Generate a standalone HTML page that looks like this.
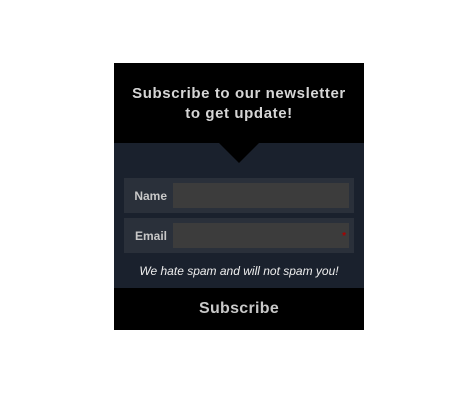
<!DOCTYPE html><html><head><style>
body{margin:0;background:#fff;width:464px;height:406px;position:relative;font-family:"Liberation Sans",sans-serif}
.p{position:absolute;left:114px;top:63px;width:250px;height:267px;background:#1a212d}
.h{position:absolute;left:0;top:0;width:250px;height:80px;background:#000;color:#d6d6d6;font-weight:bold;font-size:15px;letter-spacing:.6px;text-align:center;line-height:20px;padding-top:21px;box-sizing:border-box}
.t{position:absolute;left:105px;top:80px;width:0;height:0;border-left:20px solid transparent;border-right:20px solid transparent;border-top:20px solid #000}
.r{position:absolute;left:10px;width:230px;height:35px;background:#2a303a}
.r span{position:absolute;left:0;width:43px;text-align:right;top:11px;font-size:12px;font-weight:bold;color:#c8c8c8}
.r i{position:absolute;left:49px;top:5px;width:176px;height:25px;background:#3c3c3c}
.s{position:absolute;top:201px;left:0;width:250px;text-align:center;color:#eee;font-style:italic;font-size:12px}
.b{position:absolute;left:0;top:225px;width:250px;height:42px;background:#000;color:#c8c8c8;font-weight:bold;font-size:16px;text-align:center;line-height:42px;letter-spacing:.3px}
</style></head><body><div class="p">
<div class="h">Subscribe to our newsletter<br>to get update!</div><div class="t"></div>
<div class="r" style="top:115px"><span>Name</span><i></i></div>
<div class="r" style="top:155px"><span>Email</span><i></i><b style="position:absolute;right:8px;top:13px;color:#a00;font-size:10px">*</b></div>
<div class="s">We hate spam and will not spam you!</div>
<div class="b">Subscribe</div></div></body></html>
